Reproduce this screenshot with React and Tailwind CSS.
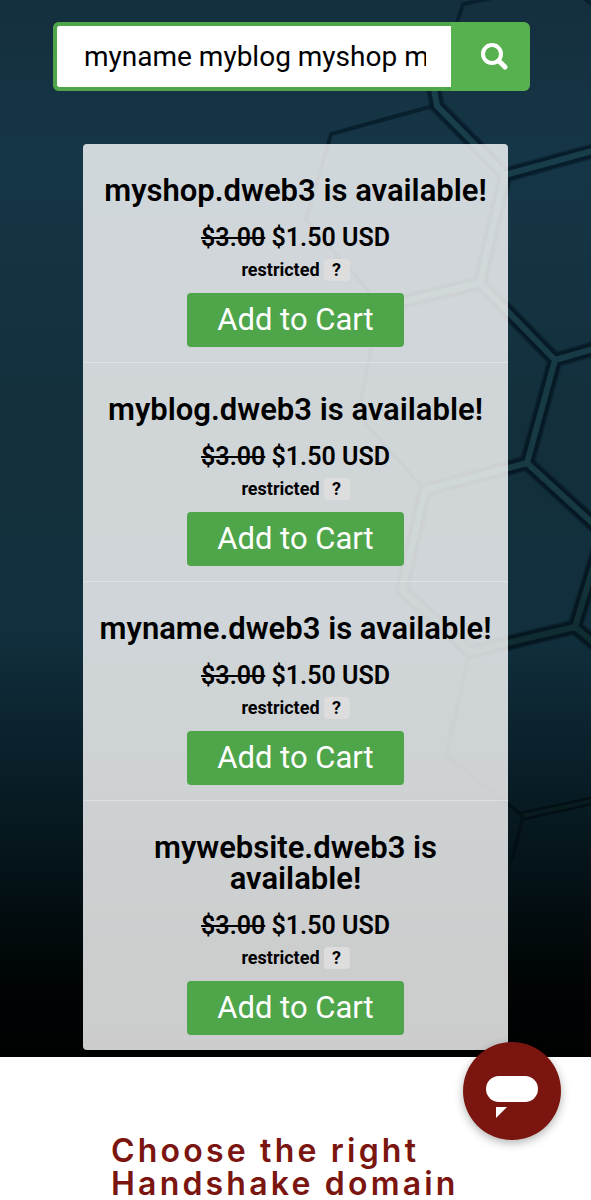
import React, { useState } from 'react';

const RESULTS = [
  { name: 'myshop.dweb3', oldPrice: '$3.00', price: '$1.50 USD' },
  { name: 'myblog.dweb3', oldPrice: '$3.00', price: '$1.50 USD' },
  { name: 'myname.dweb3', oldPrice: '$3.00', price: '$1.50 USD' },
  { name: 'mywebsite.dweb3', oldPrice: '$3.00', price: '$1.50 USD' },
];

// Seams between the hexagon tiles: a dark groove with a lighter core.
const SEAMS =
  'M433 84 L437 106 L505 175 L600 149 M505 175 L480 283 L360 312 M480 283 L555 360 L600 347 M555 360 L527 463 L425 490 L402 590 L470 652 L575 627 L600 648 M527 463 L600 530 M600 545 L575 627';

// Outer edges are a single groove with no core.
const EDGES =
  'M437 84 L463 4 L492 -2 M583 -2 L600 10 M433 106 L331 134 L306 220 L368 290 L372 345 L358 415 L425 490 M470 652 L446 755 L523 816 L512 860';

const HexBackdrop = () => (
  <svg
    className="absolute inset-0 w-full h-full"
    viewBox="0 0 591 1057"
    preserveAspectRatio="xMaxYMin slice"
    fill="none"
    aria-hidden="true"
  >
    <defs>
      <linearGradient id="core" x1="0" y1="0" x2="0" y2="1057" gradientUnits="userSpaceOnUse">
        <stop offset="0" stopColor="#193f4f" />
        <stop offset="0.5" stopColor="#163941" />
        <stop offset="0.62" stopColor="#0e2a2f" />
        <stop offset="0.8" stopColor="#06171a" />
      </linearGradient>
      <linearGradient id="groove" x1="0" y1="0" x2="0" y2="1057" gradientUnits="userSpaceOnUse">
        <stop offset="0" stopColor="#061c2b" />
        <stop offset="0.7" stopColor="#03121a" />
        <stop offset="0.85" stopColor="#010b0e" />
      </linearGradient>
    </defs>
    <path d={EDGES} stroke="url(#groove)" strokeWidth="4" strokeOpacity="0.8" strokeLinejoin="round" />
    <path d={SEAMS} stroke="url(#groove)" strokeWidth="16" strokeOpacity="0.4" strokeLinejoin="round" />
    <path d={SEAMS} stroke="url(#groove)" strokeWidth="13" strokeOpacity="0.8" strokeLinejoin="round" />
    <path d={SEAMS} stroke="url(#core)" strokeWidth="6" strokeLinejoin="round" />
    <path d="M523 816 L600 799" stroke="url(#groove)" strokeWidth="9" />
    <path d="M523 816 L600 799" stroke="url(#core)" strokeWidth="4" />
  </svg>
);

const SearchIcon = () => (
  <svg
    width="27"
    height="27"
    viewBox="0 0 27 27"
    fill="none"
    stroke="currentColor"
    strokeWidth="4"
    strokeLinecap="round"
    aria-hidden="true"
  >
    <circle cx="11" cy="11" r="9" />
    <path d="M18 18l6 6" strokeWidth="5" />
  </svg>
);

const SearchBar = () => {
  const [query, setQuery] = useState('myname myblog myshop mywebsite');

  return (
    <form
      className="flex h-[69px] overflow-hidden rounded-md bg-[#57b14f]"
      onSubmit={(e) => e.preventDefault()}
    >
      <input
        type="text"
        aria-label="Search domains"
        value={query}
        onChange={(e) => setQuery(e.target.value)}
        className="min-w-0 flex-1 rounded-l-md border-4 border-r-0 border-[#4fa54a] bg-white pl-[27px] pr-[25px] text-[28px] text-black outline-none"
      />
      <button
        type="submit"
        aria-label="Search"
        className="flex w-[79px] items-center justify-center pl-2 text-white"
      >
        <SearchIcon />
      </button>
    </form>
  );
};

const ResultRow = ({ result }) => (
  <li className="flex flex-col items-center border-b border-white/30 px-4 pt-[31px] pb-[15px] text-center text-black last:border-b-0">
    <h2 className="text-[31px] leading-[31px] font-semibold">{result.name} is available!</h2>
    <p className="mt-[17px] text-[25px] leading-[30px] font-semibold">
      <s>{result.oldPrice}</s> {result.price}
    </p>
    <p className="mt-1.5 flex items-center gap-1 text-[18px] leading-[22px] font-bold">
      restricted
      <button
        type="button"
        aria-label="About restricted domains"
        className="w-[26px] rounded-sm bg-[#dddddd]"
      >
        ?
      </button>
    </p>
    <button
      type="button"
      className="mt-3 h-[54px] w-[217px] rounded-sm bg-[#4fa54a] text-[31px] text-white"
    >
      Add to Cart
    </button>
  </li>
);

const ChatIcon = () => (
  <svg width="52" height="42" viewBox="0 0 52 42" fill="#fff" aria-hidden="true">
    <rect width="52" height="26" rx="13" />
    <path d="M10 31h11l-11 11z" />
  </svg>
);

const App = () => (
  <div className="min-h-screen bg-white font-[Roboto,sans-serif]">
    <section className="relative bg-[linear-gradient(#142f3e_0%,#153647_15%,#132f3c_40%,#112f3d_60%,#0b222d_70%,#041217_83%,#000404_93%,#000202_100%)]">
      <HexBackdrop />
      <div className="relative pt-[22px] pb-[7px]">
        <div className="pl-[53px] pr-[61px]">
          <SearchBar />
        </div>
        <ul className="mx-[83px] mt-[53px] rounded-sm bg-white/80">
          {RESULTS.map((result) => (
            <ResultRow key={result.name} result={result} />
          ))}
        </ul>
      </div>
    </section>

    <section className="pl-[111px] pr-[100px] pt-[77px]">
      <h2 className="font-[Inter,sans-serif] text-[32px] leading-[33px] font-semibold tracking-widest text-[#7b150f]">
        Choose the right Handshake domain
      </h2>
    </section>

    <button
      type="button"
      aria-label="Open chat"
      className="fixed right-[30px] bottom-[60px] flex h-[98px] w-[98px] items-center justify-center rounded-full bg-[#7b150f] pt-3 shadow-[0_3px_10px_rgba(0,0,0,0.3)]"
    >
      <ChatIcon />
    </button>
  </div>
);

export default App;
